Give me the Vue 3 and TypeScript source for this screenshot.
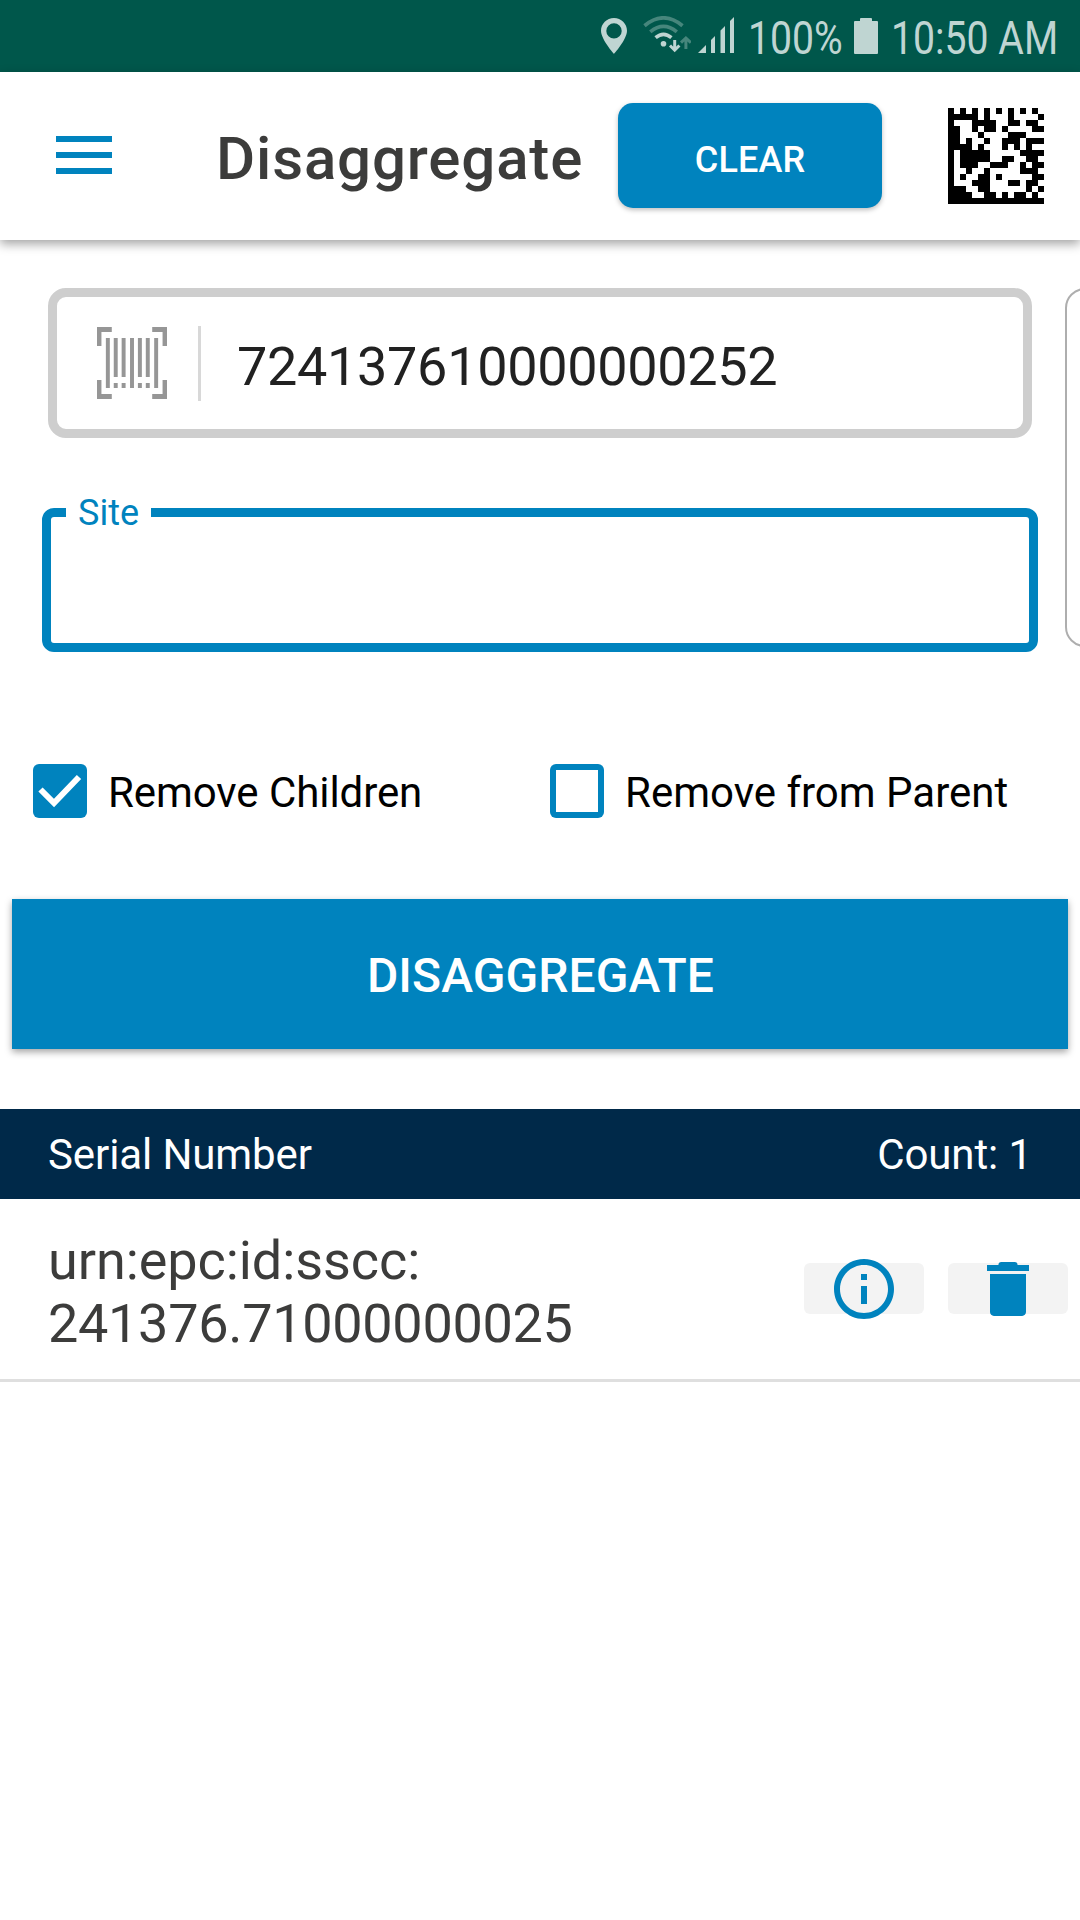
<script setup lang="ts">
import { ref } from 'vue'

interface SerialItem {
  scheme: string
  code: string
}

const scanned = ref('724137610000000252')
const removeChildren = ref(true)
const removeFromParent = ref(false)
const items = ref<SerialItem[]>([{ scheme: 'urn:epc:id:sscc:', code: '241376.71000000025' }])

// 16x16 Data Matrix symbol, one string per row
const matrix: string[] = [
  '1010101010101010',
  '1111101000100001',
  '1000111100110110',
  '1100101101000011',
  '1100010000111000',
  '1101001001110111',
  '1111010001010100',
  '1011111000001111',
  '1011111001100110',
  '1011100111001011',
  '1001001000001110',
  '1010011010000011',
  '1000111000110110',
  '1110011000000101',
  '1111001101011010',
  '1111111111111111',
]

const matrixPath = matrix
  .map((row, y) =>
    Array.from(row.matchAll(/1+/g), (m) => `M${m.index} ${y}h${m[0].length}v1h-${m[0].length}z`).join(''),
  )
  .join('')
</script>

<template>
  <div class="screen">
    <div class="status">
      <svg class="pin" viewBox="0 0 26 36">
        <path fill-rule="evenodd" d="M13 0C5.800 0 0 5.700 0 12.800C0 21.500 13 36 13 36S26 21.500 26 12.800C26 5.700 20.200 0 13 0ZM13 5.200a7.700 7.700 0 1 1 0 15.400a7.700 7.700 0 0 1 0-15.400Z" />
      </svg>
      <svg class="wifi" viewBox="0 0 48 37">
        <g fill="none" stroke-width="3.700">
          <path d="M1.500 9.700Q20.500-6 39.500 9.700" opacity=".37" />
          <path d="M7.300 15.900Q20.500 5 33.800 15.900" opacity=".37" />
          <path d="M12.600 21.600Q20.500 15 28.400 21.600" />
          <path d="M31.700 24v10M27 29.500l4.700 4.700 4.700-4.700" stroke-width="3" />
          <path d="M42.900 33v-10M38 26.700l4.900-4.700 4.900 4.700" stroke-width="3" opacity=".37" />
        </g>
        <circle cx="20.500" cy="27.800" r="2.800" stroke="none" fill="currentColor" />
      </svg>
      <svg class="signal" viewBox="0 0 36 36">
        <path d="M0 36L8 28V36ZM13 23L17 19V36H13ZM22.500 13.500L27 9V36H22.500ZM32 4L36 0V36H32Z" />
      </svg>
      <span class="narrow percent"><span>100%</span></span>
      <svg class="battery" viewBox="0 0 24 36">
        <path d="M6 1Q6 0 7 0H17Q18 0 18 1V3H23Q24 3 24 4V35Q24 36 23 36H1Q0 36 0 35V4Q0 3 1 3H6Z" />
      </svg>
      <span class="narrow clock"><span>10:50 AM</span></span>
    </div>

    <header class="bar">
      <svg class="menu" viewBox="0 0 56 38">
        <path d="M0 0H56V6H0ZM0 16H56V22H0ZM0 32H56V38H0Z" />
      </svg>
      <h1>Disaggregate</h1>
      <button class="clear">CLEAR</button>
      <svg class="matrix" viewBox="0 0 16 16" shape-rendering="crispEdges">
        <path :d="matrixPath" />
      </svg>
    </header>

    <section class="form">
      <div class="fields">
        <div class="scan">
          <svg class="barcode" viewBox="0 0 71 72" preserveAspectRatio="none">
            <path d="M0 0H15V5H4.500V19H0ZM56 0H71V19H66.500V5H56ZM0 53H4.500V67H15V72H0ZM66.500 53H71V72H56V67H66.500Z" />
            <path d="M9 11h4v50h-4zM17 11h4v39h-4zM25 11h4v39h-4zM33.500 11h4v50h-4zM41.500 11h4v39h-4zM49.500 11h4v39h-4zM58 11h4v50h-4zM17 56h4v5h-4zM25 56h4v5h-4zM41.500 56h4v5h-4zM49.500 56h4v5h-4z" />
          </svg>
          <span class="divider"></span>
          <span class="value">{{ scanned }}</span>
        </div>
        <div class="site">
          <label>Site</label>
        </div>
      </div>
      <div class="next-card"></div>
    </section>

    <section class="options">
      <label class="option">
        <svg class="box" viewBox="0 0 54 54">
          <rect width="54" height="54" rx="6" />
          <path v-if="removeChildren" class="tick" d="M7.500 25.500L21 39L46 13" />
          <path v-else class="hole" d="M6 6H48V48H6Z" />
        </svg>
        <span>Remove Children</span>
      </label>
      <label class="option">
        <svg class="box" viewBox="0 0 54 54">
          <rect width="54" height="54" rx="6" />
          <path v-if="removeFromParent" class="tick" d="M7.500 25.500L21 39L46 13" />
          <path v-else class="hole" d="M6 6H48V48H6Z" />
        </svg>
        <span>Remove from Parent</span>
      </label>
    </section>

    <button class="submit">DISAGGREGATE</button>

    <div class="list-head">
      <span>Serial Number</span>
      <span>Count: {{ items.length }}</span>
    </div>
    <div v-for="item in items" :key="item.code" class="row">
      <div class="serial">{{ item.scheme }}<br /><span class="code">{{ item.code }}</span></div>
      <button class="action">
        <svg viewBox="0 0 24 24">
          <path d="M11 7h2v2h-2zm0 4h2v6h-2zm1-9C6.480 2 2 6.480 2 12s4.480 10 10 10 10-4.480 10-10S17.520 2 12 2zm0 18c-4.410 0-8-3.590-8-8s3.590-8 8-8 8 3.590 8 8-3.590 8-8 8z" />
        </svg>
      </button>
      <button class="action">
        <svg viewBox="0 0 24 24">
          <path d="M6 19.700c0 .720.580 1.300 1.300 1.300h9.400c.720 0 1.300-.580 1.300-1.300V7H6v12.700zM19 4h-3.800q0-1-1-1H9.800q-1 0-1 1H5v2h14V4z" />
        </svg>
      </button>
    </div>
  </div>
</template>

<style>
body {
  background: #fff;
}
</style>

<style scoped>
.screen {
  width: 1080px;
  height: 1920px;
  overflow: hidden;
  background: #fff;
  font-family: Roboto, "Liberation Sans", sans-serif;
}
svg {
  display: block;
  flex: none;
}
button {
  border: 0;
  padding: 0;
  font-family: inherit;
  font-weight: 500;
  color: #fff;
  background: #0083be;
}
.status {
  display: flex;
  box-sizing: border-box;
  height: 72px;
  padding: 18px 0 0 601px;
  background: #00574b;
  color: #bfd5d2;
  fill: #bfd5d2;
  stroke: none;
}
.pin {
  width: 26px;
  height: 36px;
}
.wifi {
  width: 48px;
  height: 37px;
  margin: -2px 0 0 16px;
  stroke: #bfd5d2;
}
.signal {
  width: 36px;
  height: 36px;
  margin: -1px 0 0 7px;
}
.narrow {
  display: block;
  flex: none;
  height: 54px;
  margin-top: -7px;
  font-size: 46px;
  line-height: 55px;
  white-space: nowrap;
}
.narrow span {
  display: inline-block;
  transform-origin: 0 50%;
  transform: scaleX(0.852);
}
.percent {
  width: 94px;
  margin-left: 14px;
}
.battery {
  width: 24px;
  height: 36px;
  margin-left: 12px;
}
.clock {
  width: 178px;
  margin-left: 13px;
}
.bar {
  position: relative;
  display: flex;
  align-items: center;
  box-sizing: border-box;
  height: 168px;
  padding: 0 36px 0 56px;
  background: #fff;
  box-shadow: 0 4px 10px rgba(0, 0, 0, 0.36);
}
.menu {
  width: 56px;
  height: 38px;
  margin-top: -2px;
  fill: #0083be;
}
h1 {
  width: 402px;
  margin: 5px 0 0 104px;
  font-size: 60px;
  font-weight: 500;
  line-height: 72px;
  letter-spacing: 0.85px;
  white-space: nowrap;
  color: #3c3c3b;
}
.clear {
  width: 264px;
  height: 105px;
  margin-top: -1px;
  padding-top: 8px;
  border-radius: 15px;
  font-size: 36px;
  letter-spacing: 0.1px;
  box-shadow: 0 2px 5px rgba(0, 0, 0, 0.26);
}
.matrix {
  width: 96px;
  height: 96px;
  margin-left: 66px;
}
.form {
  display: flex;
  padding: 48px 0 0 42px;
}
.fields {
  flex: none;
  width: 996px;
}
.scan {
  display: flex;
  align-items: center;
  box-sizing: border-box;
  width: 984px;
  height: 150px;
  margin-left: 6px;
  padding-left: 40px;
  border: 9px solid #cecece;
  border-radius: 18px;
}
.barcode {
  width: 70px;
  height: 72px;
  fill: #969696;
}
.divider {
  width: 3px;
  height: 75px;
  margin-left: 31px;
  background: #d8d8d8;
}
.value {
  margin: 8px 0 0 36px;
  font-size: 54px;
  line-height: 64px;
  letter-spacing: -0.33px;
  color: #212121;
}
.site {
  position: relative;
  box-sizing: border-box;
  height: 144px;
  margin-top: 70px;
  border: 9px solid #0083be;
  border-radius: 12px;
}
.site label {
  position: absolute;
  left: 15px;
  top: -25px;
  box-sizing: border-box;
  width: 85px;
  padding-left: 12px;
  background: #fff;
  font-size: 36px;
  line-height: 42px;
  color: #0083be;
}
.next-card {
  flex: none;
  box-sizing: border-box;
  width: 400px;
  height: 359px;
  margin-left: 27px;
  border: 2px solid #aeaeae;
  border-radius: 20px;
}
.options {
  display: flex;
  margin-top: 112px;
  padding-left: 33px;
}
.option {
  display: flex;
  align-items: center;
  width: 517px;
  flex: none;
  gap: 21px;
  font-size: 42px;
  line-height: 50px;
  white-space: nowrap;
  color: #000;
}
.option span {
  margin-top: 3px;
}
.option:first-child span {
  letter-spacing: -0.07px;
}
.box {
  width: 54px;
  height: 54px;
  fill: #0083be;
}
.tick {
  fill: none;
  stroke: #fff;
  stroke-width: 6;
}
.hole {
  fill: #fff;
}
.submit {
  display: block;
  width: 1056px;
  height: 150px;
  margin: 81px 12px 0;
  padding: 3px 0 0 1px;
  font-size: 48px;
  letter-spacing: 0.08px;
  box-shadow: 0 3px 7px rgba(0, 0, 0, 0.36);
}
.list-head {
  display: flex;
  justify-content: space-between;
  box-sizing: border-box;
  height: 90px;
  margin-top: 60px;
  padding: 1px 48px 0;
  background: #002949;
  font-size: 42px;
  line-height: 90px;
  letter-spacing: -0.1px;
  color: #fff;
}
.row {
  display: flex;
  align-items: center;
  gap: 24px;
  box-sizing: border-box;
  height: 183px;
  padding: 0 12px 0 48px;
  border-bottom: 3px solid #dfdfdf;
}
.serial {
  flex: 1;
  padding-top: 5px;
  font-size: 54px;
  line-height: 63px;
  letter-spacing: -0.07px;
  color: #3c3c3b;
}
.code {
  letter-spacing: -0.31px;
}
.action {
  display: flex;
  align-items: center;
  justify-content: center;
  width: 120px;
  height: 51px;
  margin-top: -2px;
  border-radius: 6px;
  background: #f3f3f3;
}
.action svg {
  width: 72px;
  height: 72px;
  margin-top: 1px;
  fill: #0083be;
}
</style>
